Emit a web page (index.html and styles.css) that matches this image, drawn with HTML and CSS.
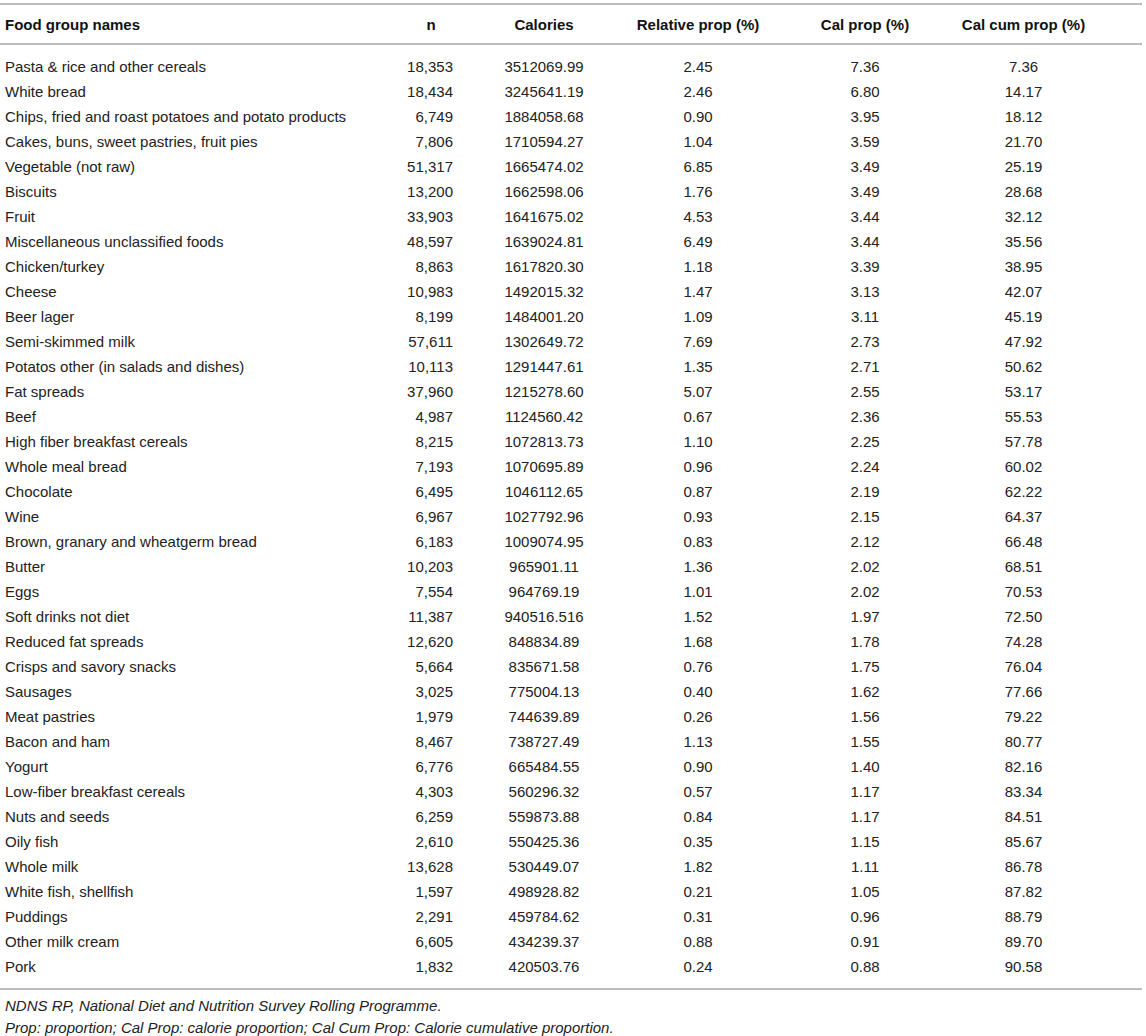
FILE: index.html
```html
<!DOCTYPE html>
<html>
<head>
<meta charset="utf-8">
<link rel="stylesheet" href="styles.css">
</head>
<body>
<div class="wrap">
<table class="tbl">
<colgroup>
<col class="c-name"><col class="c-n"><col class="c-cal"><col class="c-rel"><col class="c-cp"><col class="c-cc">
</colgroup>
<thead>
<tr><th class="name">Food group names</th><th>n</th><th>Calories</th><th>Relative prop (%)</th><th>Cal prop (%)</th><th class="last">Cal cum prop (%)</th></tr>
</thead>
<tbody>
<tr class="first"><td class="name">Pasta &amp; rice and other cereals</td><td class="num">18,353</td><td>3512069.99</td><td>2.45</td><td>7.36</td><td class="last">7.36</td></tr>
<tr><td class="name">White bread</td><td class="num">18,434</td><td>3245641.19</td><td>2.46</td><td>6.80</td><td class="last">14.17</td></tr>
<tr><td class="name">Chips, fried and roast potatoes and potato products</td><td class="num">6,749</td><td>1884058.68</td><td>0.90</td><td>3.95</td><td class="last">18.12</td></tr>
<tr><td class="name">Cakes, buns, sweet pastries, fruit pies</td><td class="num">7,806</td><td>1710594.27</td><td>1.04</td><td>3.59</td><td class="last">21.70</td></tr>
<tr><td class="name">Vegetable (not raw)</td><td class="num">51,317</td><td>1665474.02</td><td>6.85</td><td>3.49</td><td class="last">25.19</td></tr>
<tr><td class="name">Biscuits</td><td class="num">13,200</td><td>1662598.06</td><td>1.76</td><td>3.49</td><td class="last">28.68</td></tr>
<tr><td class="name">Fruit</td><td class="num">33,903</td><td>1641675.02</td><td>4.53</td><td>3.44</td><td class="last">32.12</td></tr>
<tr><td class="name">Miscellaneous unclassified foods</td><td class="num">48,597</td><td>1639024.81</td><td>6.49</td><td>3.44</td><td class="last">35.56</td></tr>
<tr><td class="name">Chicken/turkey</td><td class="num">8,863</td><td>1617820.30</td><td>1.18</td><td>3.39</td><td class="last">38.95</td></tr>
<tr><td class="name">Cheese</td><td class="num">10,983</td><td>1492015.32</td><td>1.47</td><td>3.13</td><td class="last">42.07</td></tr>
<tr><td class="name">Beer lager</td><td class="num">8,199</td><td>1484001.20</td><td>1.09</td><td>3.11</td><td class="last">45.19</td></tr>
<tr><td class="name">Semi-skimmed milk</td><td class="num">57,611</td><td>1302649.72</td><td>7.69</td><td>2.73</td><td class="last">47.92</td></tr>
<tr><td class="name">Potatos other (in salads and dishes)</td><td class="num">10,113</td><td>1291447.61</td><td>1.35</td><td>2.71</td><td class="last">50.62</td></tr>
<tr><td class="name">Fat spreads</td><td class="num">37,960</td><td>1215278.60</td><td>5.07</td><td>2.55</td><td class="last">53.17</td></tr>
<tr><td class="name">Beef</td><td class="num">4,987</td><td>1124560.42</td><td>0.67</td><td>2.36</td><td class="last">55.53</td></tr>
<tr><td class="name">High fiber breakfast cereals</td><td class="num">8,215</td><td>1072813.73</td><td>1.10</td><td>2.25</td><td class="last">57.78</td></tr>
<tr><td class="name">Whole meal bread</td><td class="num">7,193</td><td>1070695.89</td><td>0.96</td><td>2.24</td><td class="last">60.02</td></tr>
<tr><td class="name">Chocolate</td><td class="num">6,495</td><td>1046112.65</td><td>0.87</td><td>2.19</td><td class="last">62.22</td></tr>
<tr><td class="name">Wine</td><td class="num">6,967</td><td>1027792.96</td><td>0.93</td><td>2.15</td><td class="last">64.37</td></tr>
<tr><td class="name">Brown, granary and wheatgerm bread</td><td class="num">6,183</td><td>1009074.95</td><td>0.83</td><td>2.12</td><td class="last">66.48</td></tr>
<tr><td class="name">Butter</td><td class="num">10,203</td><td>965901.11</td><td>1.36</td><td>2.02</td><td class="last">68.51</td></tr>
<tr><td class="name">Eggs</td><td class="num">7,554</td><td>964769.19</td><td>1.01</td><td>2.02</td><td class="last">70.53</td></tr>
<tr><td class="name">Soft drinks not diet</td><td class="num">11,387</td><td>940516.516</td><td>1.52</td><td>1.97</td><td class="last">72.50</td></tr>
<tr><td class="name">Reduced fat spreads</td><td class="num">12,620</td><td>848834.89</td><td>1.68</td><td>1.78</td><td class="last">74.28</td></tr>
<tr><td class="name">Crisps and savory snacks</td><td class="num">5,664</td><td>835671.58</td><td>0.76</td><td>1.75</td><td class="last">76.04</td></tr>
<tr><td class="name">Sausages</td><td class="num">3,025</td><td>775004.13</td><td>0.40</td><td>1.62</td><td class="last">77.66</td></tr>
<tr><td class="name">Meat pastries</td><td class="num">1,979</td><td>744639.89</td><td>0.26</td><td>1.56</td><td class="last">79.22</td></tr>
<tr><td class="name">Bacon and ham</td><td class="num">8,467</td><td>738727.49</td><td>1.13</td><td>1.55</td><td class="last">80.77</td></tr>
<tr><td class="name">Yogurt</td><td class="num">6,776</td><td>665484.55</td><td>0.90</td><td>1.40</td><td class="last">82.16</td></tr>
<tr><td class="name">Low-fiber breakfast cereals</td><td class="num">4,303</td><td>560296.32</td><td>0.57</td><td>1.17</td><td class="last">83.34</td></tr>
<tr><td class="name">Nuts and seeds</td><td class="num">6,259</td><td>559873.88</td><td>0.84</td><td>1.17</td><td class="last">84.51</td></tr>
<tr><td class="name">Oily fish</td><td class="num">2,610</td><td>550425.36</td><td>0.35</td><td>1.15</td><td class="last">85.67</td></tr>
<tr><td class="name">Whole milk</td><td class="num">13,628</td><td>530449.07</td><td>1.82</td><td>1.11</td><td class="last">86.78</td></tr>
<tr><td class="name">White fish, shellfish</td><td class="num">1,597</td><td>498928.82</td><td>0.21</td><td>1.05</td><td class="last">87.82</td></tr>
<tr><td class="name">Puddings</td><td class="num">2,291</td><td>459784.62</td><td>0.31</td><td>0.96</td><td class="last">88.79</td></tr>
<tr><td class="name">Other milk cream</td><td class="num">6,605</td><td>434239.37</td><td>0.88</td><td>0.91</td><td class="last">89.70</td></tr>
<tr class="lastrow"><td class="name">Pork</td><td class="num">1,832</td><td>420503.76</td><td>0.24</td><td>0.88</td><td class="last">90.58</td></tr>
</tbody>
</table>
<div class="notes">
<p>NDNS RP, National Diet and Nutrition Survey Rolling Programme.</p>
<p>Prop: proportion; Cal Prop: calorie proportion; Cal Cum Prop: Calorie cumulative proportion.</p>
</div>
</div>
</body>
</html>
```
FILE: styles.css
```css
html, body {
  margin: 0;
  padding: 0;
  background: #fff;
}
body {
  font-family: "Liberation Sans", Arial, sans-serif;
  color: #222;
  font-size: 15px;
}
.wrap {
  width: 1142px;
  padding-top: 3px;
}
.tbl {
  width: 1142px;
  border-collapse: collapse;
  table-layout: fixed;
  border-top: 2px solid #bdbdbd;
  border-bottom: 2px solid #bdbdbd;
}
.c-name { width: 375px; }
.c-n { width: 112px; }
.c-cal { width: 114px; }
.c-rel { width: 194px; }
.c-cp { width: 140px; }
.c-cc { width: 207px; }
.tbl th {
  font-weight: bold;
  text-align: center;
  height: 38px;
  padding: 0;
  color: #111;
  border-bottom: 2px solid #bdbdbd;
  white-space: nowrap;
}
.tbl td {
  text-align: center;
  padding: 0;
  height: 25px;
  white-space: nowrap;
}
.tbl .name {
  text-align: left;
  padding-left: 5px;
}
.tbl td.num {
  text-align: right;
  padding-right: 34px;
}
.tbl .last {
  padding-right: 30px;
}
.tbl tr.first td {
  padding-top: 9px;
}
.tbl tr.lastrow td {
  padding-bottom: 9px;
}
.notes {
  padding-top: 5px;
  padding-left: 5px;
}
.notes p {
  margin: 0;
  font-style: italic;
  font-size: 15px;
  line-height: 22px;
  color: #222;
}
```
